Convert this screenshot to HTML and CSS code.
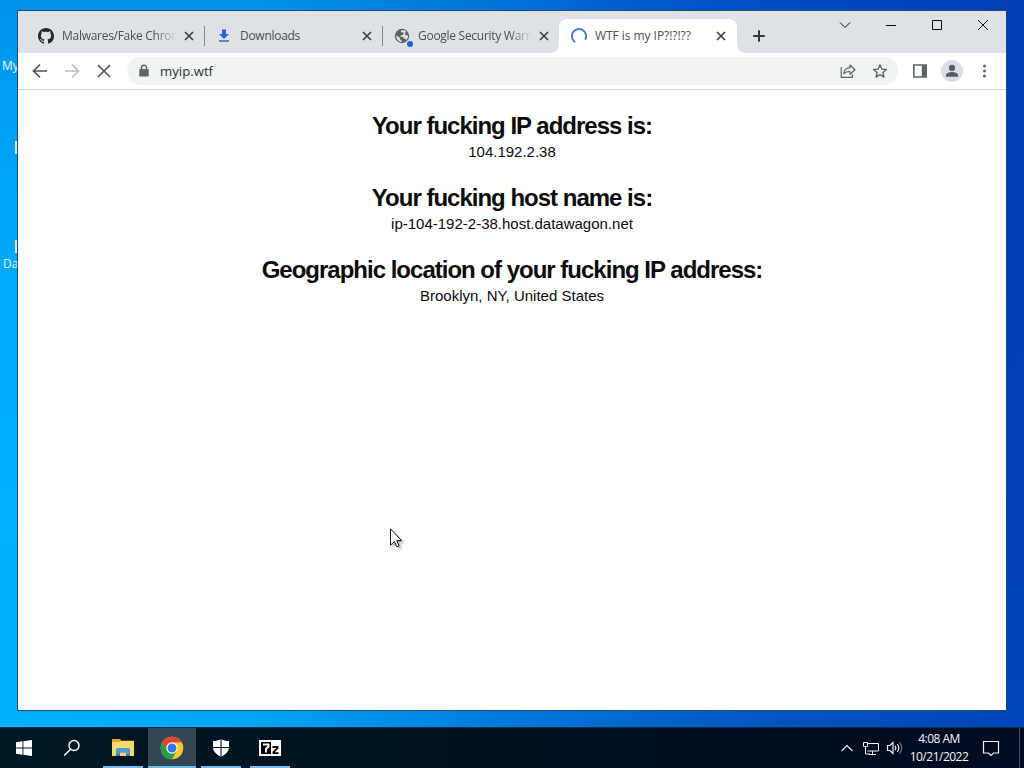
FILE: index.html
```html
<!DOCTYPE html>
<html lang="en">
<head>
<meta charset="utf-8">
<title>WTF is my IP?!?!??</title>
<link rel="stylesheet" href="styles.css">
</head>
<body>
<div class="screen">
  <main class="desktop">
    <span class="desk-label label-my">My</span>
    <span class="desk-mark mark-one"></span>
    <span class="desk-mark mark-two"></span>
    <span class="desk-label label-da">Da</span>

    <section class="window">
      <header class="tabstrip">
        <div class="tabs">
          <div class="tab">
            <svg class="fav" viewBox="0 0 16 16"><path fill="#24292f" d="M8 0C3.58 0 0 3.58 0 8c0 3.54 2.29 6.53 5.47 7.59.4.07.55-.17.55-.38 0-.19-.01-.82-.01-1.49-2.01.37-2.53-.49-2.69-.94-.09-.23-.48-.94-.82-1.13-.28-.15-.68-.52-.01-.53.63-.01 1.08.58 1.23.82.72 1.21 1.87.87 2.33.66.07-.52.28-.87.51-1.07-1.78-.2-3.64-.89-3.64-3.95 0-.87.31-1.59.82-2.15-.08-.2-.36-1.02.08-2.12 0 0 .67-.21 2.2.82.64-.18 1.32-.27 2-.27s1.36.09 2 .27c1.53-1.04 2.2-.82 2.2-.82.44 1.1.16 1.92.08 2.12.51.56.82 1.27.82 2.15 0 3.07-1.87 3.75-3.65 3.95.29.25.54.73.54 1.48 0 1.07-.01 1.93-.01 2.2 0 .21.15.46.55.38A8.01 8.01 0 0 0 16 8c0-4.42-3.58-8-8-8z"/></svg>
            <span class="title fade">Malwares/Fake Chrom</span>
            <svg class="x" viewBox="0 0 16 16"><path d="M4 4l8 8M12 4l-8 8"/></svg>
          </div>
          <div class="tab divided">
            <svg class="fav" viewBox="0 0 16 16"><path fill="#2a66d9" d="M6 1.500h4v4.500h3L8 10.900 3 6h3zM3 12.200h10v1.500H3z"/></svg>
            <span class="title">Downloads</span>
            <svg class="x" viewBox="0 0 16 16"><path d="M4 4l8 8M12 4l-8 8"/></svg>
          </div>
          <div class="tab divided third">
            <svg class="fav wide" viewBox="0 0 19 19"><circle cx="8" cy="8" r="7.200" fill="#5f6368"/><path fill="#dee1e6" d="M2.300 7.500l3.600 2.300v1.500l1.800 1.500v1.200C4.500 13.700 2 11 2.300 7.500zM7 2.600c2-.8 4-.2 5.300.9l-1.200 1.600-1.700.3-.7 1.700-2 .5-.4 1.200 2.800.2.600 1.600h1.400l1 1.300c1.600-1.400 2.200-3.100 1.900-5l-1.500.9-1.300-1 .2-1.300L9 4.500 7 4z"/><circle cx="16" cy="16" r="4" fill="#dee1e6"/><circle cx="16" cy="16" r="3" fill="#1a62dc"/></svg>
            <span class="title fade">Google Security Warn</span>
            <svg class="x" viewBox="0 0 16 16"><path d="M4 4l8 8M12 4l-8 8"/></svg>
          </div>
          <div class="tab active">
            <svg class="fav" viewBox="0 0 16 16"><path fill="none" stroke="#427dcb" stroke-width="1.900" d="M4.200 14.100A7.100 7.100 0 1 1 14.100 11.800"/></svg>
            <span class="title">WTF is my IP?!?!??</span>
            <svg class="x" viewBox="0 0 16 16"><path d="M4 4l8 8M12 4l-8 8"/></svg>
          </div>
          <svg class="newtab" viewBox="0 0 16 16"><path d="M8 2.200v11.600M2.200 8h11.600"/></svg>
        </div>
        <div class="controls">
          <svg viewBox="0 0 46 29"><path d="M18 11.500l5 5 5-5"/></svg>
          <svg viewBox="0 0 46 29"><path d="M18 14.500h10"/></svg>
          <svg viewBox="0 0 46 29"><path d="M18.500 9.500h9v9h-9z"/></svg>
          <svg viewBox="0 0 46 29"><path d="M18 9l10 10M28 9l-10 10"/></svg>
        </div>
      </header>

      <nav class="toolbar">
        <svg class="nav" viewBox="0 0 16 16"><path d="M15 8H2M8 1.500L1.500 8 8 14.500"/></svg>
        <svg class="nav dim" viewBox="0 0 16 16"><path d="M1 8h13M8 1.500L14.500 8 8 14.500"/></svg>
        <svg class="nav" viewBox="0 0 16 16"><path d="M2 2l12 12M14 2L2 14"/></svg>
        <div class="omnibox">
          <svg class="lock" viewBox="0 0 16 16"><path fill="#5f6368" d="M4 6h8a.7.7 0 0 1 .7.7v6a.9.900 0 0 1-.9.900H4.200a.9.900 0 0 1-.9-.900v-6A.7.7 0 0 1 4 6z"/><path fill="none" stroke="#5f6368" stroke-width="1.400" d="M5.500 6.500V4.800a2.500 2.500 0 0 1 5 0v1.700"/></svg>
          <span class="url">myip.wtf</span>
          <svg class="act" viewBox="0 0 16 16"><path d="M1.200 4v10.300h11.200v-3M3.800 10.700C4.200 6.800 6.500 5 10 4.700V2l5 4.700-5 4.600V8.500c-2.800 0-4.800.6-6.200 2.200z"/></svg>
          <svg class="act" viewBox="0 0 16 16"><path stroke-width="1.400" d="M8 1.800l1.800 4.300 4.700.4-3.600 3 1.100 4.600L8 11.700l-4 2.400 1.100-4.600-3.600-3 4.700-.4z"/></svg>
        </div>
        <svg class="side" viewBox="0 0 16 16"><path fill="#5f6368" d="M1 1.200h14v13.600H1zM2.600 2.800v10.400h7.200V2.800z" fill-rule="evenodd"/></svg>
        <svg class="avatar" viewBox="0 0 22 22"><circle cx="11" cy="11" r="11" fill="#dcdde5"/><circle cx="11" cy="7.900" r="3.100" fill="#565b68"/><path fill="#565b68" d="M5 16.700v-1.500c0-2.200 3.600-3.200 6-3.200s6 1 6 3.200v1.500z"/></svg>
        <svg class="dots" viewBox="0 0 16 16"><g fill="#5f6368"><circle cx="8.500" cy="3" r="1.500"/><circle cx="8.500" cy="8" r="1.500"/><circle cx="8.500" cy="13" r="1.500"/></g></svg>
      </nav>

      <article class="page">
        <h1>Your fucking IP address is:</h1>
        <p>104.192.2.38</p>
        <h1>Your fucking host name is:</h1>
        <p>ip-104-192-2-38.host.datawagon.net</p>
        <h1>Geographic location of your fucking IP address:</h1>
        <p>Brooklyn, NY, United States</p>
      </article>
    </section>
  </main>

  <footer class="taskbar">
    <div class="apps">
      <div class="app"><svg width="16" height="16" viewBox="0 0 16 16"><path fill="#fff" d="M0 2.200l6.500-.9v6.200H0zM7.400 1.200L16 0v7.500H7.400zM0 8.400h6.500v6.300L0 13.800zM7.400 8.400H16V16l-8.600-1.200z"/></svg></div>
      <div class="app"><svg width="18" height="18" viewBox="0 0 18 18"><g fill="none" stroke="#fff" stroke-width="1.400"><circle cx="11" cy="6.500" r="5"/><path d="M7.500 10.200L1.200 16.600"/></g></svg></div>
      <div class="app open first"><svg width="24" height="20" viewBox="0 0 24 20"><path fill="#e5a62b" d="M1 1h8l1.500 2H23v8H1z"/><path fill="#fbd968" d="M1 4h8l1.500-1.200H23V18H1z"/><path fill="#4a9ad4" d="M5 18v-6.500A1.500 1.500 0 0 1 6.500 10h11a1.500 1.500 0 0 1 1.500 1.500V18h-4v-4.500H9V18z"/><path fill="#2c80c5" d="M5 16h4v2H5zM15 16h4v2h-4zM9 13.500h6v1H9z"/></svg></div>
      <div class="app open current"><svg width="24" height="24" viewBox="0 0 24 24"><circle cx="12" cy="12" r="11.300" fill="#fbc928"/><path fill="#df4437" d="M2.210 6.350A11.300 11.300 0 0 1 21.790 6.350L12 6.500 7.200 14.500z"/><path fill="#269c4b" d="M2.210 6.350A11.300 11.300 0 0 0 12 23.300L16.800 14.700 7.500 14.700z"/><circle cx="12" cy="12" r="5.700" fill="#fff"/><circle cx="12" cy="12" r="4.500" fill="#3478e5"/></svg></div>
      <div class="app open"><svg width="18" height="20" viewBox="0 0 18 20"><path fill="#fff" d="M9 1c2.500 1.600 4.800 2 8 2v6c0 4-3 7.500-8 9.800C4 16.500 1 13 1 9V3c3.200 0 5.500-.4 8-2z"/><path stroke="#001524" stroke-width="1.100" d="M9 0v19M0 9.500h18"/></svg></div>
      <div class="app open"><svg width="22" height="18" viewBox="0 0 22 18"><path fill="#fff" d="M0 1h22v16H0z"/><path fill="#000" d="M2 3h10v12H2z"/><path fill="none" stroke="#000" stroke-width="1.800" d="M13.500 8h5v1.200l-4 4V14.200h5"/><path fill="none" stroke="#fff" stroke-width="2" d="M4 5.500h5.500v2L7 10v3.500"/></svg></div>
    </div>
    <div class="tray">
      <svg width="12" height="16" viewBox="0 0 12 16"><path d="M.6 11L6 5.500l5.400 5.500"/></svg>
      <svg class="net" width="18" height="16" viewBox="0 0 18 16"><path d="M6 3.500h10.500v7.500H5.500M1.500 2.500h4v4h-4zM3.500 6.500V14H8M10.500 11v3M7 14.500h7"/></svg>
      <svg class="snd" width="18" height="16" viewBox="0 0 18 16"><path d="M1.500 5.500H4l3-3v11l-3-3H1.500zM9 5.800q1.700 2.200 0 4.400M11.300 4q3 4 0 8"/><path opacity=".45" d="M13.600 2.200q4.200 5.800 0 11.600"/></svg>
      <div class="clock"><span>4:08 AM</span><span>10/21/2022</span></div>
      <svg class="note" width="18" height="18" viewBox="0 0 18 18"><path d="M1.500 2.500h15v11.500h-5L9 16.500 6.500 14h-5z"/></svg>
      <span class="peek"></span>
    </div>
  </footer>
  <svg class="cursor" viewBox="0 0 14 20"><path fill="#fff" stroke="#16161e" d="M.5.800v16.400l3.900-3.700 2.500 5.300 2.200-1-2.400-5.200h4.900z"/></svg>
</div>
</body>
</html>
```
FILE: styles.css
```css
* { box-sizing: border-box; }
body { margin: 0; overflow: hidden; }
svg { display: block; flex: none; }

.screen {
  position: relative;
  width: 1024px;
  height: 768px;
  display: flex;
  flex-direction: column;
  font-family: "Open Sans", "Noto Sans", sans-serif;
}

.desktop {
  position: relative;
  flex: 1;
  display: flex;
  padding: 10px 17px 16px;
  background:
    linear-gradient(90deg, #00b2fb 0%, #00a5f3 25%, #0078dc 50%, #0453c2 75%, #0344ba 100%) bottom / 100% 17px no-repeat,
    linear-gradient(90deg, #0093ec 0%, #0092ec 25%, #0078dc 45%, #004fc6 70%, #003db5 100%) top / 100% 10px no-repeat,
    linear-gradient(180deg, #0093ec 0%, #00a5f8 25%, #00b2ff 70%, #00b2fb 100%) left / 50% 100% no-repeat,
    linear-gradient(180deg, #003db5 0%, #003eb6 60%, #0344ba 100%);
}

.desk-label {
  position: absolute;
  font-size: 12px;
  line-height: 16px;
  color: #e8f7ff;
}
.label-my { left: 2px; top: 58px; }
.label-da { left: 3px; top: 256px; }
.desk-mark { position: absolute; left: 15px; width: 2px; height: 13px; background: #c9edff; }
.mark-one { top: 141px; }
.mark-two { top: 240px; }

.window {
  position: relative;
  flex: 1;
  display: flex;
  flex-direction: column;
  border: 1px solid #234a6c;
  background: #fff;
}

.tabstrip {
  height: 42px;
  display: flex;
  justify-content: space-between;
  background: #dee1e6;
}
.tabs { display: flex; align-items: flex-end; padding-left: 8px; }
.tab {
  position: relative;
  width: 178px;
  height: 34px;
  display: flex;
  align-items: center;
  padding: 0 0 0 12px;
}
.third { width: 177px; }
.divided::before {
  content: "";
  position: absolute;
  left: 0;
  top: 7px;
  width: 1px;
  height: 20px;
  background: #85888d;
}
.active { background: #fff; border-radius: 8px 8px 0 0; }
.active::before, .active::after {
  content: "";
  position: absolute;
  bottom: 0;
  width: 8px;
  height: 8px;
}
.active::before { left: -8px; background: radial-gradient(circle at 0 0, transparent 7.500px, #fff 8px); }
.active::after { right: -8px; background: radial-gradient(circle at 100% 0, transparent 7.500px, #fff 8px); }
.fav { width: 16px; height: 16px; }
.wide { width: 19px; height: 19px; margin: 3px -3px 0 0; }
.title {
  width: 115px;
  margin-left: 8px;
  overflow: hidden;
  white-space: nowrap;
  font-size: 12px;
  line-height: 18px;
  letter-spacing: -0.280px;
  color: #4b4f53;
}
.active .title { width: 114px; letter-spacing: -0.050px; }
.third .title { width: 114px; }
.fade { -webkit-mask-image: linear-gradient(90deg, #000 80%, transparent 100%); mask-image: linear-gradient(90deg, #000 80%, transparent 100%); }
.x { width: 16px; height: 16px; margin-left: 4px; stroke: #3c4043; stroke-width: 1.700; fill: none; }
.newtab { width: 16px; height: 16px; margin: 0 0 9px 14px; stroke: #35383c; stroke-width: 2; fill: none; }
.controls { display: flex; }
.controls svg { width: 46px; height: 29px; fill: none; stroke: #111; stroke-width: 1; }

.toolbar {
  height: 37px;
  display: flex;
  align-items: center;
  padding-left: 14px;
  border-bottom: 1px solid #d5d6d8;
  background: #fff;
}
.nav { width: 16px; height: 16px; margin-right: 16px; fill: none; stroke: #505357; stroke-width: 1.700; }
.dim { stroke: #bdbfc2; }
.omnibox {
  width: 771px;
  height: 28px;
  margin-left: -1px;
  display: flex;
  align-items: center;
  padding: 0 10px 0 9px;
  border-radius: 14px;
  background: #f1f3f4;
}
.lock { width: 16px; height: 16px; }
.url { flex: 1; margin-left: 8px; font-size: 13.200px; line-height: 20px; color: #303236; }
.act { width: 16px; height: 16px; margin-left: 16px; fill: none; stroke: #5f6368; stroke-width: 1.200; stroke-linejoin: round; }
.side { width: 16px; height: 16px; margin-left: 14px; }
.avatar { width: 22px; height: 22px; margin-left: 13px; }
.dots { width: 16px; height: 16px; margin-left: 13px; }

.page { flex: 1; text-align: center; font-family: "Liberation Sans", Arial, sans-serif; color: #0b0b0b; padding-top: 20px; }
.page h1 { margin: 0; font-size: 24px; line-height: 32px; letter-spacing: -1px; white-space: nowrap; }
.page p { margin: 0 0 20px; font-size: 15px; line-height: 20px; }

.taskbar {
  height: 41px;
  flex: none;
  display: flex;
  justify-content: space-between;
  border-top: 1px solid #05314e;
  background: linear-gradient(90deg, #001724 0%, #00131f 40%, #020c20 75%, #020b22 100%);
}
.apps { display: flex; gap: 1px; }
.app { width: 48px; height: 40px; display: flex; align-items: center; justify-content: center; }
.app:first-child { margin-right: -1px; }
.app.open { position: relative; }
.app.first { margin-left: 2px; }
.open::after { content: ""; position: absolute; left: 4px; right: 4px; bottom: 0; height: 2px; background: #76b9ed; }
.current { background: #34464f; }
.current::after { left: 0; right: 0; }

.tray { display: flex; align-items: center; }
.tray svg { fill: none; stroke: #edf1f5; stroke-width: 1.200; }
.tray .net { margin-left: 9px; stroke-width: 1; }
.tray .snd { margin-left: 6px; }
.clock {
  width: 60px;
  margin-left: 5px;
  display: flex;
  flex-direction: column;
  align-items: center;
  font-size: 12px;
  line-height: 18px;
  letter-spacing: -0.500px;
  color: #f3f5f8;
}
.note { margin-left: 13px; }
.peek { width: 1px; height: 40px; margin: 0 4px 0 19px; background: #454d60; }

.cursor { position: absolute; left: 390px; top: 528px; width: 14px; height: 20px; filter: drop-shadow(2px 2px 1px rgba(0, 0, 0, .3)); }
```
